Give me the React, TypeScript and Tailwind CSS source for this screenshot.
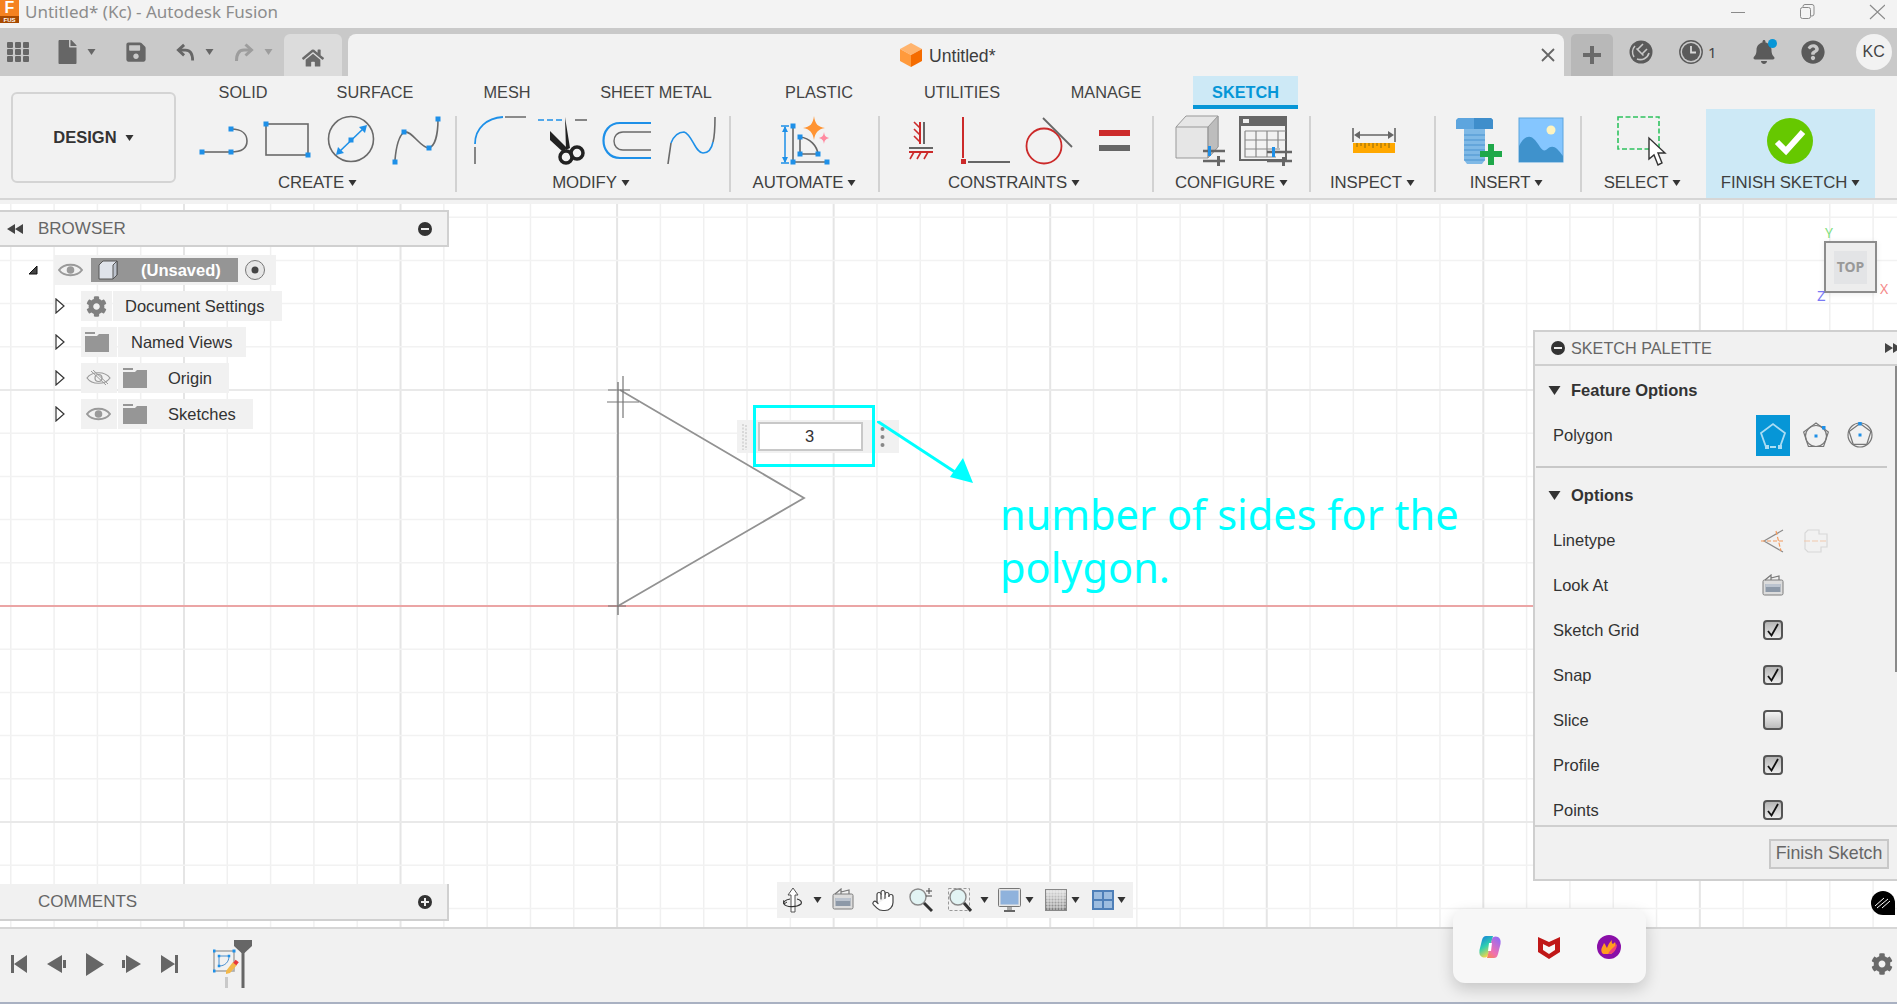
import React from "react";
import { FaCog, FaBell, FaFile, FaSave, FaHome, FaQuestionCircle } from "react-icons/fa";
import { Hand } from "lucide-react";

const BLUE = "#1e90e8";
const Sq = ({ x, y, s = 5 }: { x: number; y: number; s?: number }) => <rect x={x - s / 2} y={y - s / 2} width={s} height={s} fill={BLUE} />;

const Caret = ({ className = "" }: { className?: string }) => (
  <svg viewBox="0 0 8 6" className={"w-[9px] h-[6px] shrink-0 " + className}><path d="M0 0H8L4 6Z" fill="currentColor" /></svg>
);

const Eye = ({ off = false, color = "#9a9a9a" }: { off?: boolean; color?: string }) => (
  <svg viewBox="0 0 25 16" className="w-[25px] h-[16px]">
    <path d="M1 8C6 1 19 1 24 8C19 15 6 15 1 8Z" fill="none" stroke={color} strokeWidth={off ? 1.2 : 2} />
    {off ? <>
      <circle cx="12.5" cy="8" r="3.5" fill="none" stroke={color} strokeWidth="1.2" />
      <path d="M5 1L20 15M7 0L22 14" stroke={color} strokeWidth="1" />
    </> : <circle cx="12.5" cy="8" r="3.8" fill={color} />}
  </svg>
);

const Folder = () => (
  <svg viewBox="0 0 24 20" className="w-[24px] h-[20px]">
    <path d="M0 0H10V2H0Z M0 4H12L14 2H24V20H0Z" fill="#969696" />
  </svg>
);

const ExpandTri = () => (
  <svg viewBox="0 0 10 16" className="w-[10px] h-[16px]"><path d="M1 1L9 8L1 15Z" fill="#fff" stroke="#333" strokeWidth="1.2" /></svg>
);

const CircleBtn = ({ plus = false }: { plus?: boolean }) => (
  <svg viewBox="0 0 14 14" className="w-[14px] h-[14px]">
    <circle cx="7" cy="7" r="7" fill="#333" />
    <rect x="3" y="6" width="8" height="2" fill="#eee" />
    {plus && <rect x="6" y="3" width="2" height="8" fill="#eee" />}
  </svg>
);

const Group = ({ className, label, viewBox, children, highlight = false, labelClass = "" }: { className: string; label: string; viewBox: string; children: React.ReactNode; highlight?: boolean; labelClass?: string }) => (
  <div className={"flex flex-col items-center h-[89px] shrink-0 " + className + (highlight ? " bg-[#cde9f6]" : "")}>
    <svg viewBox={viewBox} className="w-full h-[56px] mt-[4px] shrink-0">{children}</svg>
    <div className={"flex items-center gap-[4px] mt-[4px] h-[20px] text-[16.8px] leading-none text-[#3f3f3f] tracking-[-0.1px] " + labelClass}>
      <span>{label}</span><Caret className="text-[#333]" />
    </div>
  </div>
);

const Sep = () => <div className="w-[2px] h-[76px] mt-[7px] bg-[#d2d2d2] shrink-0" />;

const Tab = ({ className, children }: { className: string; children: React.ReactNode }) => (
  <div className={"flex items-center justify-center h-[33px] text-[16.3px] text-[#444] shrink-0 " + className}>{children}</div>
);

const TitleBar = () => (
  <div className="flex items-center h-[28px] bg-[#f3f3f3] shrink-0 overflow-hidden">
    <div className="relative flex flex-col w-[19px] h-[28px] shrink-0 self-start">
      <div className="w-[19px] h-[16px] bg-[#f58220] flex items-center justify-center text-white font-bold text-[16px] leading-none">F</div>
      <div className="w-[19px] h-[7px] bg-[#a84a00] flex items-center justify-center text-white font-bold text-[6px] leading-none">FUS</div>
    </div>
    <div className="ml-[6px] text-[#8c8c8c] text-[17px] font-['Noto_Sans'] leading-none mb-[5px]">Untitled* (Kc) - Autodesk Fusion</div>
    <svg viewBox="0 0 154 16" className="ml-auto mr-[12px] w-[154px] h-[16px] mb-[4px]" fill="none" stroke="#8a8a8a" strokeWidth="1">
      <path d="M0 8.5H14" />
      <rect x="69.5" y="3.5" width="10" height="11" rx="2" />
      <path d="M72 3V2.5A2 2 0 0 1 74 .5H81A2 2 0 0 1 83 2.5V10A2 2 0 0 1 81 12H80" />
      <path d="M139 1L154 15M154 1L139 15" strokeWidth="1.2" />
    </svg>
  </div>
);

const TabStrip = () => (
  <div className="flex items-center h-[48px] bg-[#c9c9c9] shrink-0">
    <svg viewBox="0 0 22 20" className="ml-[7px] w-[22px] h-[20px]" fill="#666">
      <rect width="6" height="6" rx="1" /><rect x="8" width="6" height="6" rx="1" /><rect x="16" width="6" height="6" rx="1" />
      <rect y="7" width="6" height="6" rx="1" /><rect x="8" y="7" width="6" height="6" rx="1" /><rect x="16" y="7" width="6" height="6" rx="1" />
      <rect y="14" width="6" height="6" rx="1" /><rect x="8" y="14" width="6" height="6" rx="1" /><rect x="16" y="14" width="6" height="6" rx="1" />
    </svg>
    <FaFile className="ml-[29px] text-[#666] w-[19px] h-[24px]" />
    <Caret className="ml-[10px] text-[#666]" />
    <FaSave className="ml-[29px] text-[#666] w-[22px] h-[22px]" />
    <svg viewBox="0 0 20 18" className="ml-[29px] w-[19px] h-[18px]" fill="none" stroke="#666" strokeWidth="3"><path d="M8.5 1.5L2.5 7L8.5 12.5" /><path d="M3 7H10C15 7 17.5 11 17.5 18" /></svg>
    <Caret className="ml-[10px] text-[#666]" />
    <svg viewBox="0 0 20 18" className="ml-[20px] w-[20px] h-[18px]" fill="none" stroke="#9d9d9d" strokeWidth="3"><path d="M11.5 1.5L17.5 7L11.5 12.5" /><path d="M17 7H10C5 7 2.5 11 2.5 18" /></svg>
    <Caret className="ml-[10px] text-[#9d9d9d]" />
    <div className="ml-[11px] self-end w-[58px] h-[42px] bg-[#dcdcdc] rounded-t-[6px] flex items-center justify-center shrink-0">
      <FaHome className="text-[#6a6a6a] w-[22px] h-[20px] mt-[5px]" />
    </div>
    <div className="ml-[6px] self-end w-[1216px] h-[42px] bg-[#f2f2f2] rounded-t-[8px] flex items-center pl-[552px] pr-[9px] shrink-0">
      <svg viewBox="0 0 22 24" className="w-[22px] h-[24px] shrink-0">
        <path d="M11 0L22 6L11 12L0 6Z" fill="#ffb46e" /><path d="M0 6L11 12V24L0 18Z" fill="#ff9a3c" /><path d="M22 6L11 12V24L22 18Z" fill="#f56c00" />
      </svg>
      <span className="ml-[7px] mt-[2px] text-[17.6px] text-[#3d3d3d]">Untitled*</span>
      <svg viewBox="0 0 14 14" className="ml-auto w-[14px] h-[14px]"><path d="M1 1L13 13M13 1L1 13" stroke="#666" strokeWidth="1.8" /></svg>
    </div>
    <div className="ml-[7px] self-end w-[42px] h-[42px] bg-[#b8b8b8] rounded-t-[5px] flex items-center justify-center shrink-0">
      <svg viewBox="0 0 18 18" className="w-[18px] h-[18px]"><path d="M7 0H11V7H18V11H11V18H7V11H0V7H7Z" fill="#6a6a6a" /></svg>
    </div>
    <svg viewBox="0 0 24 24" className="ml-[16px] w-[24px] h-[24px] shrink-0">
      <circle cx="12" cy="12" r="11.5" fill="#5a5a5a" />
      <path d="M5 17A9 9 0 0 1 6 6M8 19A9 9 0 0 0 20 13" stroke="#c9c9c9" strokeWidth="1.6" fill="none" />
      <path d="M9 9L14 4M13 14L18 9M7.5 8.5L14.5 15.5" stroke="#c9c9c9" strokeWidth="1.6" fill="none" />
    </svg>
    <svg viewBox="0 0 24 24" className="ml-[26px] w-[24px] h-[24px] shrink-0">
      <circle cx="12" cy="12" r="11.2" fill="none" stroke="#5a5a5a" strokeWidth="1.4" />
      <circle cx="12" cy="12" r="9" fill="#5a5a5a" />
      <path d="M12 6V12.5H17" stroke="#d8d8d8" strokeWidth="1.8" fill="none" />
    </svg>
    <span className="ml-[5px] text-[15px] text-[#444] font-['Noto_Sans']">1</span>
    <div className="relative ml-[36px] w-[22px] h-[24px] shrink-0">
      <FaBell className="text-[#5a5a5a] w-[22px] h-[24px]" />
      <div className="absolute right-[-2px] top-[-1px] w-[9px] h-[9px] rounded-full bg-[#0696d7]" />
    </div>
    <FaQuestionCircle className="ml-[26px] text-[#5a5a5a] w-[24px] h-[24px] shrink-0" />
    <div className="ml-[31px] w-[36px] h-[36px] rounded-full bg-[#f2f2f2] flex items-center justify-center text-[16px] text-[#444] font-['Liberation_Sans'] shrink-0">KC</div>
  </div>
);

const Ribbon = () => (
  <div className="flex h-[128px] bg-[#f2f2f2] shrink-0 relative">
    <div className="w-[190px] shrink-0 pl-[11px] pt-[16px]">
      <div className="flex items-center justify-center gap-[8px] w-[165px] h-[91px] rounded-[6px] border-2 border-[#d4d4d4] text-[16.5px] font-bold text-[#333]">
        <span>DESIGN</span><Caret className="text-[#333]" />
      </div>
    </div>
    <div className="flex flex-col">
      <div className="flex h-[33px] shrink-0">
        <Tab className="w-[106px]">SOLID</Tab>
        <Tab className="w-[158px]">SURFACE</Tab>
        <Tab className="w-[106px]">MESH</Tab>
        <Tab className="w-[192px]">SHEET METAL</Tab>
        <Tab className="w-[134px]">PLASTIC</Tab>
        <Tab className="w-[152px]">UTILITIES</Tab>
        <Tab className="w-[136px]">MANAGE</Tab>
        <Tab className="ml-[19px] w-[105px] bg-[#cde9f6] border-b-[4px] pt-[3px] border-[#0696d7] font-bold text-[#0696d7]">SKETCH</Tab>
      </div>
      <div className="flex">
        <Group className="w-[265px]" label="CREATE" viewBox="190 113 265 56" labelClass="pr-[10px]">
          <g fill="none" stroke="#6a6a6a" strokeWidth="1.6">
            <path d="M202 152H231" /><path d="M231 129C243 129 247 135 247 141C247 147 243 152 231 152" />
            <rect x="266" y="124" width="42" height="31" />
            <circle cx="351" cy="139" r="22.5" />
            <path d="M395 160C396 148 399 136 404 132C412 130 420 148 429 148C435 146 438 134 438 119" />
          </g>
          <path d="M338 153L365 127" stroke={BLUE} strokeWidth="1.6" />
          <path d="M336 155L338 147L344 153Z M367 125L365 133L359 127Z" fill={BLUE} />
          <Sq x={202} y={152} /><Sq x={231} y={152} /><Sq x={231} y={129} /><Sq x={266} y={124} /><Sq x={308} y={155} /><Sq x={351} y={140} /><Sq x={395} y={162} /><Sq x={404} y={132} /><Sq x={429} y={148} /><Sq x={438} y={119} />
        </Group>
        <Sep />
        <Group className="w-[272px]" label="MODIFY" viewBox="457 113 272 56" labelClass="pr-[4px]">
          <path d="M475 144C475 128 487 118 503 117" stroke={BLUE} strokeWidth="1.8" fill="none" />
          <path d="M475 147V164M505 117H526" stroke="#6a6a6a" strokeWidth="1.6" />
          <path d="M538 120H565" stroke={BLUE} strokeWidth="1.6" strokeDasharray="6 3" />
          <path d="M575 120H587" stroke="#6a6a6a" strokeWidth="1.6" />
          <path d="M565 117L570 148L566 150Z M550 131L567 148L563 152L550 140Z" fill="#222" />
          <circle cx="566" cy="157" r="6" fill="none" stroke="#222" strokeWidth="3.5" /><circle cx="577" cy="153" r="6" fill="none" stroke="#222" strokeWidth="3.5" />
          <path d="M651 123H620C598 123 598 158 620 158H651" fill="none" stroke={BLUE} strokeWidth="2.2" />
          <path d="M651 132H623C611 132 611 150 623 150H651" fill="none" stroke="#6a6a6a" strokeWidth="1.4" />
          <path d="M668 164C669 156 670 150 671 143" stroke="#6a6a6a" strokeWidth="1.6" fill="none" />
          <path d="M671 143C675 133 680 132 684 132C692 134 695 153 703 153C710 153 712 147 713 142" stroke={BLUE} strokeWidth="1.6" fill="none" />
          <path d="M713 142C715 135 715 125 715 117" stroke="#6a6a6a" strokeWidth="1.6" fill="none" />
        </Group>
        <Sep />
        <Group className="w-[147px]" label="AUTOMATE" viewBox="731 113 147 56">
          <path d="M785 127V162M781 126H789M781 163H789" stroke={BLUE} strokeWidth="1.5" />
          <path d="M785 126L782 132H788Z M785 163L782 157H788Z" fill={BLUE} />
          <path d="M793 126V162H827" stroke="#666" strokeWidth="1.6" fill="none" />
          <path d="M800 137C810 138 817 146 818 154H800Z" stroke="#666" strokeWidth="1.6" fill="none" />
          <Sq x={793} y={126} /><Sq x={793} y={162} /><Sq x={827} y={162} /><Sq x={800} y={137} /><Sq x={800} y={154} /><Sq x={818} y={154} />
          <path d="M814 116C815 124 818 127 825 128C818 129 815 133 814 140C813 133 810 129 803 128C810 127 813 124 814 116Z" fill="#ff9433" />
          <path d="M824 132C824.5 136 826 137 829 138C826 139 824.5 140 824 144C823.5 140 822 139 819 138C822 137 823.5 136 824 132Z" fill="#ff8aa0" />
        </Group>
        <Sep />
        <Group className="w-[272px]" label="CONSTRAINTS" viewBox="880 113 272 56" labelClass="pr-[4px]">
          <path d="M924 122V144" stroke="#666" strokeWidth="2" />
          <path d="M920 122V144" stroke="#cc2a2a" strokeWidth="2" />
          <path d="M914 122L920 128M914 129L920 135M914 136L920 142" stroke="#cc2a2a" strokeWidth="1.6" />
          <path d="M909 148H933" stroke="#666" strokeWidth="2" />
          <path d="M909 152H933" stroke="#cc2a2a" strokeWidth="2" />
          <path d="M914 152L910 159M921 152L917 159M928 152L924 159" stroke="#cc2a2a" strokeWidth="1.6" />
          <path d="M963 117V158" stroke="#cc2a2a" strokeWidth="2" />
          <rect x="961" y="159" width="5" height="5" fill="#cc2a2a" />
          <path d="M968 162H1010" stroke="#666" strokeWidth="2" />
          <circle cx="1044" cy="146" r="17.5" fill="none" stroke="#cc2a2a" strokeWidth="1.8" />
          <path d="M1043 118L1072 147" stroke="#666" strokeWidth="1.8" />
          <rect x="1099" y="130" width="31" height="6" fill="#cc2a2a" />
          <rect x="1099" y="145" width="31" height="6" fill="#666" />
        </Group>
        <Sep />
        <Group className="w-[155px]" label="CONFIGURE" viewBox="1154 113 155 56">
          <path d="M1176 127L1186 116H1218V147L1208 158H1176Z" fill="#e6e6e6" stroke="#999" />
          <path d="M1208 127L1218 116V147L1208 158Z" fill="#bdbdbd" stroke="#999" />
          <path d="M1176 127H1208V158" fill="none" stroke="#999" />
          <path d="M1203 151H1225M1203 161H1225" stroke="#666" strokeWidth="2.4" />
          <rect x="1208" y="146" width="3" height="10" fill={BLUE} /><rect x="1217" y="156" width="3" height="10" fill="#666" />
          <rect x="1240" y="117" width="46" height="43" fill="#f2f2f2" stroke="#666" strokeWidth="2" />
          <rect x="1240" y="117" width="46" height="9" fill="#666" /><rect x="1243" y="119" width="6" height="4" fill="#eee" />
          <path d="M1245 131H1286M1245 140H1286M1245 149H1280M1245 131V157H1276M1256 131V157M1267 131V157M1278 131V148" stroke="#888" strokeWidth="1.2" fill="none" />
          <path d="M1267 152H1292M1267 161H1292" stroke="#666" strokeWidth="2.4" />
          <rect x="1272" y="147" width="3" height="10" fill={BLUE} /><rect x="1282" y="157" width="3" height="9" fill="#666" />
        </Group>
        <Sep />
        <Group className="w-[123px]" label="INSPECT" viewBox="1311 113 123 56">
          <path d="M1353 128V142M1395 128V142M1356 135H1392" stroke="#666" strokeWidth="1.6" />
          <path d="M1354 135L1360 131V139Z M1394 135L1388 131V139Z" fill="#666" />
          <rect x="1353" y="143" width="42" height="10" fill="#ffa800" />
          <path d="M1357 143V147M1361 143V146M1365 143V148M1369 143V146M1373 143V148M1377 143V146M1381 143V148M1385 143V146M1389 143V148" stroke="#8a6a10" strokeWidth="1" />
        </Group>
        <Sep />
        <Group className="w-[144px]" label="INSERT" viewBox="1436 113 144 56" labelClass="pr-[3px]">
          <path d="M1458 118H1491L1493 120V129H1456V120Z" fill="#5da5de" />
          <path d="M1474 118H1491L1493 120V129H1474Z" fill="#3f8ecb" />
          <path d="M1464 129H1485V160L1482 164H1467L1464 160Z" fill="#7fb9e6" />
          <path d="M1464 135H1485M1464 140H1485M1464 145H1485M1464 150H1485M1464 155H1485M1464 160H1485" stroke="#4a94cf" strokeWidth="1.2" />
          <path d="M1488 144H1494V151H1502V157H1494V165H1488V157H1480V151H1488Z" fill="#1fa84a" />
          <rect x="1519" y="118" width="44" height="44" fill="#85c6ff" stroke="#5da5de" />
          <path d="M1519 162V146C1524 136 1530 134 1535 140C1540 146 1542 152 1546 150C1552 144 1556 146 1563 156V162Z" fill="#3f92cc" />
          <circle cx="1551" cy="130" r="4.5" fill="#fdf3c0" />
        </Group>
        <Sep />
        <Group className="w-[124px]" label="SELECT" viewBox="1582 113 124 56" labelClass="pr-[3px]">
          <rect x="1618" y="117" width="41" height="32" fill="none" stroke="#2fc25f" strokeWidth="1.6" strokeDasharray="5 2.5" />
          <path d="M1649 138V159L1654 155L1658 165L1662 163L1658 153H1665Z" fill="#fff" stroke="#333" strokeWidth="1.4" />
        </Group>
        <Group className="w-[169px]" label="FINISH SKETCH" viewBox="1706 113 169 56" highlight>
          <ellipse cx="1790" cy="141" rx="23" ry="23" fill="#66c800" />
          <path d="M1777 142L1786 151L1803 132" stroke="#fff" strokeWidth="6" fill="none" />
        </Group>
      </div>
    </div>
    <div className="absolute left-0 right-0 top-[122px] h-[2px] bg-[#d6d6d6]" />
  </div>
);

const gridXs = Array.from({ length: 45 }, (_, i) => i - 4);
const gridYs = Array.from({ length: 18 }, (_, i) => i - 4);

const CanvasDrawing = () => (
  <svg viewBox="0 204 1897 723" className="absolute inset-0 w-full h-full">
    {gridXs.map((k) => (
      <line key={k} x1={184 + 43.31 * k} x2={184 + 43.31 * k} y1="204" y2="927" stroke={k % 5 === 0 ? "#e5e5e5" : "#f0f0f0"} strokeWidth={k % 5 === 0 ? 2 : 1.5} />
    ))}
    {gridYs.map((k) => (
      <line key={k} y1={390 + 43.2 * k} y2={390 + 43.2 * k} x1="0" x2="1897" stroke={k % 5 === 0 ? "#e9e9e9" : "#f2f2f2"} strokeWidth={k % 5 === 0 ? 2 : 1.5} />
    ))}
    <line x1="0" x2="1897" y1="606" y2="606" stroke="#eba5a5" strokeWidth="2" />
    <path d="M618 382V615" stroke="#666" strokeWidth="1.2" />
    <path d="M620 390L804 498L618 606" fill="none" stroke="#929292" strokeWidth="1.8" />
    <path d="M608 390H630M607 402H639M623 376V418M608 606H626" stroke="#777" strokeWidth="1.2" fill="none" />
  </svg>
);

const BrowserPanel = () => (
  <>
    <div className="absolute left-0 top-[6px] w-[449px] h-[37px] bg-[#f1f1f1] border-2 border-l-0 border-[#d0d0d0] flex items-center">
      <svg viewBox="0 0 16 10" className="ml-[7px] w-[16px] h-[10px]"><path d="M8 0V10L0 5Z M16 0V10L8 5Z" fill="#444" /></svg>
      <span className="ml-[15px] text-[17px] text-[#666]">BROWSER</span>
      <div className="ml-auto mr-[15px] flex"><CircleBtn /></div>
    </div>
    <div className="absolute left-0 top-[51px] flex flex-col gap-[6px] text-[16.5px] text-[#333] leading-none">
      <div className="flex items-center h-[30px] pl-[28px]">
        <svg viewBox="0 0 10 10" className="w-[10px] h-[10px]"><path d="M9 1V9H1Z" fill="#444" stroke="#111" /></svg>
        <div className="ml-[16px] w-[222px] h-[30px] bg-[#f1f1f1] flex items-center pl-[4px]">
          <Eye />
          <div className="ml-[8px] w-[147px] h-[24px] bg-[#959595] flex items-center pl-[7px]">
            <svg viewBox="0 0 20 20" className="w-[20px] h-[20px] shrink-0">
              <path d="M1 5L5 1H19V15L15 19H1Z" fill="#dfe3ea" stroke="#555" />
              <path d="M15 5L19 1V15L15 19Z" fill="#bcc2cc" stroke="#555" />
            </svg>
            <span className="ml-[23px] font-bold text-[16.5px] text-white">(Unsaved)</span>
          </div>
          <svg viewBox="0 0 20 20" className="ml-[7px] w-[20px] h-[20px]">
            <circle cx="10" cy="10" r="9.5" fill="#e6e6e6" stroke="#777" />
            <circle cx="10" cy="10" r="3.5" fill="#444" />
          </svg>
        </div>
      </div>
      <div className="flex items-center h-[30px] pl-[55px]">
        <ExpandTri />
        <div className="ml-[16px] w-[31px] h-[30px] bg-[#f1f1f1] flex items-center justify-center"><FaCog className="text-[#808080] w-[21px] h-[21px]" /></div>
        <div className="ml-[1px] w-[169px] h-[30px] bg-[#f1f1f1] flex items-center pl-[12px]">Document Settings</div>
      </div>
      <div className="flex items-center h-[30px] pl-[55px]">
        <ExpandTri />
        <div className="ml-[16px] w-[36px] h-[30px] bg-[#f1f1f1] flex items-center pl-[4px]"><Folder /></div>
        <div className="ml-[1px] w-[128px] h-[30px] bg-[#f1f1f1] flex items-center pl-[13px]">Named Views</div>
      </div>
      <div className="flex items-center h-[30px] pl-[55px]">
        <ExpandTri />
        <div className="ml-[16px] w-[36px] h-[30px] bg-[#f1f1f1] flex items-center pl-[5px]"><Eye off /></div>
        <div className="ml-[1px] w-[111px] h-[30px] bg-[#f1f1f1] flex items-center pl-[5px]"><Folder /><span className="ml-[21px]">Origin</span></div>
      </div>
      <div className="flex items-center h-[30px] pl-[55px]">
        <ExpandTri />
        <div className="ml-[16px] w-[36px] h-[30px] bg-[#f1f1f1] flex items-center pl-[5px]"><Eye /></div>
        <div className="ml-[1px] w-[135px] h-[30px] bg-[#f1f1f1] flex items-center pl-[5px]"><Folder /><span className="ml-[21px]">Sketches</span></div>
      </div>
    </div>
    <div className="absolute left-0 top-[680px] w-[449px] h-[37px] bg-[#f1f1f1] border-r-2 border-b-2 border-[#d0d0d0] flex items-center pt-[1px]">
      <span className="ml-[38px] text-[17px] text-[#666]">COMMENTS</span>
      <div className="ml-auto mr-[15px] flex"><CircleBtn plus /></div>
    </div>
  </>
);

const InputBox = () => (
  <>
    <div className="absolute left-[737px] top-[216px] w-[162px] h-[33px] bg-[#f1f1f1] flex items-center">
      <svg viewBox="0 0 6 28" className="ml-[5px] w-[6px] h-[28px]"><path d="M1 1V27M4 2V27" stroke="#cfcfcf" strokeWidth="1.5" strokeDasharray="2 1.5" /></svg>
      <div className="ml-[10px] w-[105px] h-[29px] bg-white border-2 border-[#c8c8c8] flex items-center justify-center text-[16.5px] text-[#333] pr-[2px]">3</div>
      <svg viewBox="0 0 4 20" className="ml-[17px] w-[5px] h-[20px]"><circle cx="2" cy="2" r="2" fill="#888" /><circle cx="2" cy="10" r="2" fill="#888" /><circle cx="2" cy="18" r="2" fill="#888" /></svg>
    </div>
    <div className="absolute left-[753px] top-[201px] w-[122px] h-[62px] border-[3px] border-[#00ffff]" />
    <svg viewBox="877 421 96 62" className="absolute left-[877px] top-[217px] w-[96px] h-[62px]">
      <path d="M877 421L958 474" stroke="#00ffff" strokeWidth="3" />
      <path d="M973 483L950 477L963 458Z" fill="#00ffff" />
    </svg>
    <div className="absolute left-[1000px] top-[284px] w-[480px] text-[41.5px] leading-[53px] text-[#00ffff] font-['Noto_Sans']">number of sides for the<br />polygon.</div>
  </>
);

const ViewCube = () => (
  <>
    <div className="absolute left-[1824px] top-[37px] w-[53px] h-[52px] border-2 border-[#8c8c8c] bg-[#ededed] flex items-center justify-center shadow-[0_1px_6px_rgba(0,0,0,0.08)]">
      <div className="w-[33px] h-[33px] bg-[#e3e4e6] flex items-center justify-center text-[14px] font-bold text-[#999] font-['Noto_Sans'] leading-none">TOP</div>
    </div>
    <span className="absolute left-[1825px] top-[22px] text-[14px] leading-none text-[#7fe07f] font-['Noto_Sans']">Y</span>
    <span className="absolute left-[1880px] top-[78px] text-[14px] leading-none text-[#f58a8a] font-['Noto_Sans']">X</span>
    <span className="absolute left-[1817px] top-[84px] text-[15px] leading-none text-[#7a7af5] font-['Noto_Sans']">Z</span>
  </>
);

const Check = ({ checked = true }: { checked?: boolean }) => (
  <div className={"w-[20px] h-[20px] rounded-[4px] border-2 border-[#555] flex items-center justify-center bg-gradient-to-b mb-[2px] " + (checked ? "from-[#b5b5b5] to-[#ececec]" : "from-[#f4f4f4] to-[#bcbcbc]")}>
    {checked && <svg viewBox="0 0 14 14" className="w-[14px] h-[14px]"><path d="M2 8L5.5 12.5L12 1" fill="none" stroke="#111" strokeWidth="1.8" /></svg>}
  </div>
);

const PRow = ({ label, children }: { label: string; children?: React.ReactNode }) => (
  <div className="flex items-center h-[45px] shrink-0 pl-[18px] text-[16.5px] text-[#333]">
    <span className="w-[203px]">{label}</span>
    <div className="w-[34px] flex justify-center shrink-0">{children}</div>
  </div>
);

const SecHead = ({ label, className }: { label: string; className: string }) => (
  <div className={"flex items-center pl-[13px] shrink-0 " + className}>
    <Caret className="w-[13px] h-[9px] text-[#333]" />
    <span className="ml-[10px] text-[16.5px] font-bold text-[#333]">{label}</span>
  </div>
);

const LookAt = () => (
  <svg viewBox="0 0 22 22" className="w-[22px] h-[22px] mb-[2px]">
    <rect x="1" y="6" width="20" height="15" rx="1.5" fill="#dcdcdc" stroke="#7d7d7d" />
    <rect x="3.5" y="10" width="15" height="8" fill="#8d99a8" />
    <rect x="3.5" y="10" width="15" height="3" fill="#bcc4cf" />
    <path d="M3 6L9 1V6M9 4L17 2V6" fill="none" stroke="#777" strokeWidth="1.2" />
  </svg>
);

const SketchPalette = () => (
  <div className="absolute right-0 top-[126px] w-[364px] h-[551px] bg-[#f1f1f1] flex flex-col border-l-2 border-[#cfcfcf] border-b-2">
    <div className="flex items-center h-[36px] shrink-0 border-t-2 border-b-2 border-[#cfcfcf]">
      <div className="ml-[16px] flex"><CircleBtn /></div>
      <span className="ml-[6px] text-[16.2px] text-[#666]">SKETCH PALETTE</span>
      <svg viewBox="0 0 16 10" className="ml-auto w-[12px] h-[10px] shrink-0" preserveAspectRatio="xMinYMid slice"><path d="M0 0L8 5L0 10Z M8 0L16 5L8 10Z" fill="#444" /></svg>
    </div>
    <div className="relative flex-1 overflow-hidden flex flex-col">
      <SecHead label="Feature Options" className="h-[48px]" />
      <div className="flex items-center h-[42px] shrink-0 pl-[18px] text-[16.5px] text-[#333]">
        <span className="w-[203px]">Polygon</span>
        <div className="w-[34px] h-[41px] bg-[#0696d7] shrink-0 flex items-center justify-center">
          <svg viewBox="0 0 34 41" className="w-[34px] h-[41px]">
            <path d="M10 32L5 18L17 9L29 18L24 32" fill="none" stroke="#a9dcf3" strokeWidth="1.8" />
            <path d="M14 32H20" stroke="#d6f0fb" strokeWidth="1.6" />
            <rect x="9" y="30" width="4" height="4" fill="#a9dcf3" /><rect x="22" y="30" width="4" height="4" fill="#a9dcf3" />
          </svg>
        </div>
        <svg viewBox="0 0 26 27" className="ml-[13px] w-[26px] h-[27px]" fill="none" stroke="#777" strokeWidth="1.2">
          <path d="M13 1L25.4 10L20.6 24.5H5.4L.6 10Z" /><circle cx="13" cy="14" r="10.5" />
          <rect x="19" y="4" width="3.5" height="3.5" fill={BLUE} stroke="none" /><rect x="11.5" y="12.5" width="3" height="3" fill={BLUE} stroke="none" />
        </svg>
        <svg viewBox="0 0 26 26" className="ml-[18px] w-[26px] h-[26px]" fill="none" stroke="#777" strokeWidth="1.2">
          <circle cx="13" cy="13" r="12" /><path d="M13 1.5L23.9 9.4L19.8 22.3H6.2L2.1 9.4Z" />
          <rect x="11.2" y="0" width="3.5" height="3.5" fill={BLUE} stroke="none" /><rect x="11.5" y="11.5" width="3" height="3" fill={BLUE} stroke="none" />
        </svg>
      </div>
      <div className="mt-[10px] ml-[1px] w-[351px] h-[2px] bg-[#c8c8c8] shrink-0" />
      <SecHead label="Options" className="mt-[4px] h-[47px]" />
      <div className="flex items-center h-[45px] -mt-[1px] shrink-0 pl-[18px] text-[16.5px] text-[#333]">
        <span className="w-[203px]">Linetype</span>
        <svg viewBox="0 0 24 24" className="ml-[5px] w-[24px] h-[24px]">
          <path d="M22 1L3 12L22 23" fill="none" stroke="#8a8a8a" strokeWidth="1.2" />
          <path d="M0 12H24M15 2L20 22" fill="none" stroke="#f49a5c" strokeWidth="1.2" strokeDasharray="4 2" />
        </svg>
        <svg viewBox="0 0 24 24" className="ml-[19px] w-[24px] h-[24px]" fill="none">
          <path d="M4 1H15V5H23V18H17V23H4L1 20V4Z" stroke="#d8d8d8" strokeWidth="1.2" />
          <path d="M0 12H24" stroke="#f2c9ad" strokeWidth="1.2" strokeDasharray="6 2" />
        </svg>
      </div>
      <PRow label="Look At"><LookAt /></PRow>
      <PRow label="Sketch Grid"><Check /></PRow>
      <PRow label="Snap"><Check /></PRow>
      <PRow label="Slice"><Check checked={false} /></PRow>
      <PRow label="Profile"><Check /></PRow>
      <PRow label="Points"><Check /></PRow>
      <div className="absolute right-0 top-0 w-[2px] h-[306px] bg-[#8a8a8a]" />
    </div>
    <div className="h-[54px] shrink-0 border-t-2 border-[#cfcfcf] flex items-start justify-end pr-[8px] pt-[12px]">
      <div className="w-[120px] h-[30px] bg-[#e9e9e9] border-2 border-[#c8c8c8] flex items-center justify-center text-[17.8px] text-[#666] leading-none">Finish Sketch</div>
    </div>
  </div>
);

const NavBar = () => (
  <div className="absolute left-[777px] top-[678px] w-[356px] h-[36px] bg-[#f1f1f1] flex items-center text-[#333]">
    <svg viewBox="0 0 20 26" className="ml-[6px] w-[20px] h-[26px]">
      <path d="M10 1L15 8H12V25H8V8H5Z" fill="#fff" stroke="#555" />
      <path d="M7 12C2 13 0 15 1 17C3 20 13 21 18 17C19 15 18 13 14 12" fill="none" stroke="#333" strokeWidth="1.2" />
      <path d="M1 17L0 13M1 17L4 15" stroke="#333" fill="none" />
    </svg>
    <Caret className="ml-[10px]" />
    <div className="ml-[10px] flex"><LookAt /></div>
    <Hand className="ml-[17px] w-[24px] h-[25px] text-[#444] shrink-0" strokeWidth={1.2} fill="#fff" />
    <svg viewBox="0 0 24 26" className="ml-[14px] w-[24px] h-[26px]">
      <circle cx="9" cy="10" r="8" fill="#e2f4f4" stroke="#8a8a8a" strokeWidth="1.4" />
      <path d="M15 16L23 24" stroke="#333" strokeWidth="3" />
      <path d="M20 1V7M17 4H23M17 9H23" stroke="#444" strokeWidth="1" />
    </svg>
    <svg viewBox="0 0 24 26" className="ml-[15px] w-[24px] h-[26px]">
      <rect x=".5" y="1.5" width="21" height="22" fill="none" stroke="#999" strokeDasharray="3 2" />
      <circle cx="10" cy="10" r="8" fill="#e2f4f4" stroke="#8a8a8a" strokeWidth="1.4" />
      <path d="M16 16L23 24" stroke="#333" strokeWidth="3" />
    </svg>
    <Caret className="ml-[8px]" />
    <svg viewBox="0 0 23 25" className="ml-[9px] w-[23px] h-[25px]">
      <rect x=".5" y=".5" width="22" height="18" rx="1" fill="#e6e6e6" stroke="#777" />
      <rect x="2.5" y="2.5" width="18" height="14" fill="#8fb2dc" />
      <path d="M9 19H14V22H9Z" fill="#aaa" /><path d="M6 23H17" stroke="#666" strokeWidth="2" />
    </svg>
    <Caret className="ml-[4px]" />
    <svg viewBox="0 0 22 22" className="ml-[11px] w-[22px] h-[22px]">
      <defs><linearGradient id="gg" x1="0" x2="0" y1="0" y2="1"><stop offset="0" stopColor="#e0e0e0" /><stop offset="1" stopColor="#777" /></linearGradient></defs>
      <rect width="22" height="22" fill="url(#gg)" />
      <path d="M0 3H22M0 6H22M0 9H22M0 12H22M0 15H22M0 18H22M3 0V22M6 0V22M9 0V22M12 0V22M15 0V22M18 0V22" stroke="#f4f4f4" strokeWidth=".7" />
      <rect x=".5" y=".5" width="21" height="21" fill="none" stroke="#888" />
    </svg>
    <Caret className="ml-[4px]" />
    <svg viewBox="0 0 22 20" className="ml-[12px] w-[22px] h-[20px]">
      <rect width="22" height="20" fill="#4e7fb8" />
      <rect x="2" y="2" width="8" height="7" fill="#9dbde0" /><rect x="12" y="2" width="8" height="7" fill="#9dbde0" /><rect x="2" y="11" width="8" height="7" fill="#9dbde0" /><rect x="12" y="11" width="8" height="7" fill="#9dbde0" />
    </svg>
    <Caret className="ml-[3px]" />
  </div>
);

const Bubble = () => (
  <div className="absolute left-[1871px] top-[687px] w-[24px] h-[24px] rounded-full rounded-br-none bg-black flex items-center justify-center">
    <svg viewBox="0 0 16 12" className="w-[16px] h-[12px]"><path d="M0 9L9 1M2 11L13 2M7 11L15 4" stroke="#fff" strokeWidth="1" fill="none" /></svg>
  </div>
);

const BottomBar = () => (
  <div className="flex items-center h-[77px] pb-[3px] bg-[#f1f1f1] border-t-2 border-b-2 border-t-[#d6d6d6] border-b-[#a9b1c2] shrink-0">
    <svg viewBox="0 0 16 18" className="ml-[11px] w-[16px] h-[18px]" fill="#666"><path d="M0 0H3V18H0Z M16 0V18L3 9Z" /></svg>
    <svg viewBox="0 0 19 18" className="ml-[20px] w-[19px] h-[18px]" fill="#666"><path d="M15 0V18L0 9Z M16 5H19V13H16Z" /></svg>
    <svg viewBox="0 0 18 23" className="ml-[20px] w-[18px] h-[23px]" fill="#666"><path d="M0 0L18 11.5L0 23Z" /></svg>
    <svg viewBox="0 0 19 18" className="ml-[18px] w-[19px] h-[18px]" fill="#666"><path d="M4 0V18L19 9Z M0 5H3V13H0Z" /></svg>
    <svg viewBox="0 0 17 18" className="ml-[20px] w-[17px] h-[18px]" fill="#666"><path d="M0 0V18L14 9Z M14 0H17V18H14Z" /></svg>
    <svg viewBox="0 0 39 48" className="ml-[35px] w-[39px] h-[48px]">
      <rect x="1" y="11" width="20" height="20" fill="none" stroke="#aaa" strokeWidth="1.6" />
      <path d="M6 16H16C16 22 12 26 6 26Z" fill="none" stroke="#4a8fce" strokeWidth="1" />
      <Sq x={1} y={11} s={3} /><Sq x={21} y={11} s={3} /><Sq x={1} y={31} s={3} /><Sq x={6} y={16} s={2.5} /><Sq x={16} y={16} s={2.5} /><Sq x={6} y={26} s={2.5} />
      <path d="M13 31L20 22L24 25L17 33L13 34Z" fill="#f3b84a" />
      <rect x="21" y="20.5" width="4" height="4" fill="#e8383a" transform="rotate(38 23 22.5)" />
      <rect x="12" y="37" width="3" height="11" fill="#c9c9c9" />
      <path d="M21 0H39V6L31.5 13H28.5L21 6Z" fill="#666" />
      <rect x="28.5" y="12" width="3" height="36" fill="#666" />
    </svg>
    <FaCog className="ml-auto mr-[4px] w-[22px] h-[22px] text-[#6a6a6a]" />
  </div>
);

const Tray = () => (
  <div className="absolute left-[1453px] top-[909px] w-[193px] h-[74px] pt-[2px] rounded-[12px] bg-[#f7f7f7] shadow-[0_6px_16px_rgba(0,0,0,0.18)] flex items-center">
    <svg viewBox="0 0 24 24" className="ml-[25px] w-[24px] h-[24px]">
      <defs>
        <linearGradient id="cp1" x1="0" x2="0.4" y1="0" y2="1"><stop offset="0" stopColor="#1478e0" /><stop offset="0.55" stopColor="#2fd0b0" /><stop offset="1" stopColor="#f2d64a" /></linearGradient>
        <linearGradient id="cp2" x1="0.6" x2="0" y1="0" y2="1"><stop offset="0" stopColor="#9a6cf0" /><stop offset="0.6" stopColor="#f070b0" /><stop offset="1" stopColor="#f58a4a" /></linearGradient>
      </defs>
      <path d="M8 1H15L10 20C9 23 6 23 4 22C2 21 1 19 1.5 15L4 5C5 2 6 1 8 1Z" fill="url(#cp1)" />
      <path d="M16 23H9L14 4C15 1 18 1 20 2C22 3 23 5 22.5 9L20 19C19 22 18 23 16 23Z" fill="url(#cp2)" />
      <path d="M11 8H14L13 16H10Z" fill="#fff" />
    </svg>
    <svg viewBox="0 0 22 24" className="ml-[36px] w-[22px] h-[24px]">
      <path d="M0 2L11 7L22 2V17L11 24L0 17Z" fill="#c01818" />
      <path d="M5 9L11 12L17 9V15L11 19L5 15Z" fill="#f7f7f7" />
    </svg>
    <svg viewBox="0 0 24 24" className="ml-[37px] w-[24px] h-[24px]">
      <circle cx="12" cy="12" r="12" fill="#8a0fa8" />
      <path d="M5 18C3 13 6 12 7 8C9 10 9 12 10 13C11 10 12 8 15 5C14 9 16 10 18 7C20 12 18 17 14 19H8C7 19 6 19 5 18Z" fill="#ff9d1e" />
      <path d="M11 19C13 15 16 13 20 9C20 14 17 18 13 19Z" fill="#f0407a" />
    </svg>
  </div>
);

export default function App() {
  return (
    <div className="relative flex flex-col w-[1897px] h-[1004px] overflow-hidden bg-white font-['Liberation_Sans',sans-serif]">
      <TitleBar />
      <TabStrip />
      <Ribbon />
      <div className="relative flex-1 bg-white overflow-hidden">
        <CanvasDrawing />
        <BrowserPanel />
        <InputBox />
        <ViewCube />
        <NavBar />
        <Bubble />
        <SketchPalette />
      </div>
      <BottomBar />
      <Tray />
    </div>
  );
}
